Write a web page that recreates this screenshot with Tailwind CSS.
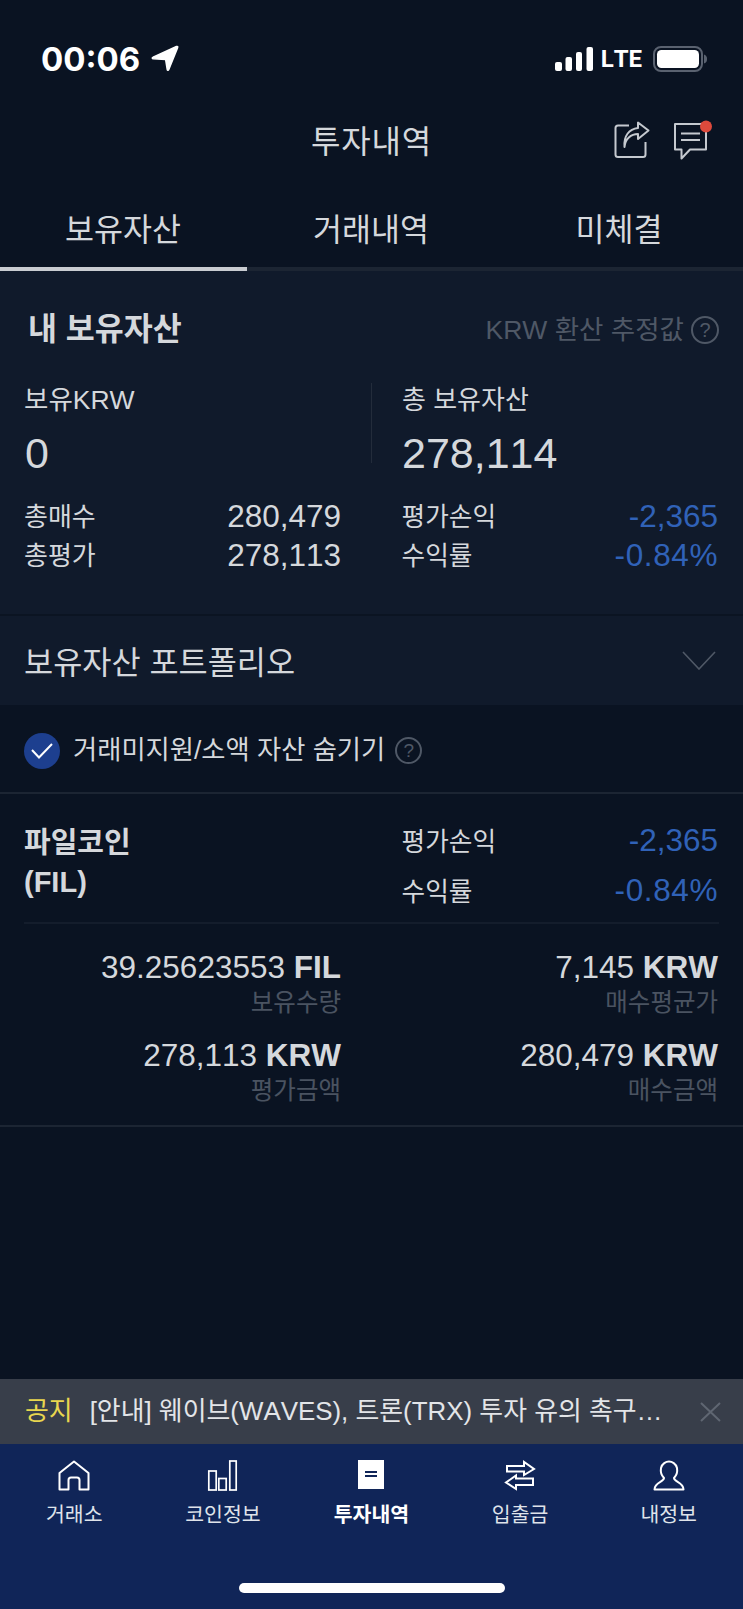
<!DOCTYPE html>
<html lang="ko">
<head>
<meta charset="utf-8">
<title>투자내역</title>
<script src="https://cdn.jsdelivr.net/npm/@tailwindcss/browser@4"></script>
</head>
<body class="bg-[#0a1322]">
<div class="w-[743px] h-[1609px] flex flex-col overflow-hidden bg-[#0a1322] text-[#d5d8dc] [font-kerning:none] font-['Liberation_Sans','Noto_Sans_CJK_KR',sans-serif]">

	<!-- status bar -->
	<div class="h-[116px] pt-[2px] shrink-0 flex items-center justify-between pl-[41px] pr-[35px]">
		<div class="flex items-center gap-[11px]">
			<span class="text-[33px] leading-none font-bold text-white font-['Inter',sans-serif]">00:06</span>
			<svg width="28" height="27" viewBox="0 0 28 27" class="-mt-[1px]"><path d="M25.5 1.5C26.5 1.2 27 1.7 26.6 2.6L17.8 24.4C17.3 25.7 16.4 25.6 16.2 24.4L14.6 14.4L2.4 13.8C1 13.7 0.9 12.7 2.1 12.2Z" fill="#fff" stroke="#fff" stroke-width="1.5" stroke-linejoin="round"/></svg>
		</div>
		<div class="flex items-center">
			<svg width="38" height="24" viewBox="0 0 38 24" fill="#fff"><rect x="0" y="15" width="7" height="9" rx="2"/><rect x="10.5" y="10" width="6.5" height="14" rx="2"/><rect x="21" y="5" width="6" height="19" rx="2"/><rect x="31.5" y="0" width="6.5" height="24" rx="2"/></svg>
			<span class="ml-[8px] text-[24px] leading-none font-bold text-white font-['Roboto',sans-serif]">LTE</span>
			<svg width="55" height="26" viewBox="0 0 55 26" class="ml-[11px]"><rect x="1" y="1" width="48" height="24" rx="7" fill="none" stroke="#5a6270" stroke-width="2"/><rect x="4" y="4" width="42" height="18" rx="4.5" fill="#fff"/><path d="M51 8.5C53.5 9.5 54 11 54 13C54 15 53.5 16.5 51 17.5Z" fill="#5a6270"/></svg>
		</div>
	</div>

	<!-- title -->
	<div class="h-[48px] pt-[3px] shrink-0 relative flex items-center justify-center">
		<span class="text-[32px] leading-none tracking-[0.8px] text-[#d5d8dc]">투자내역</span>
		<svg width="36" height="38" viewBox="0 0 36 38" fill="none" stroke="#c5c9cf" stroke-width="2" class="absolute left-[614px] top-[5px]"><path d="M15 4.5H4C2.5 4.5 1.5 5.5 1.5 7V33.5C1.5 35 2.5 36 4 36H29C30.5 36 31.5 35 31.5 33.5V21"/><path d="M10.5 26C11 18 17 13 24 13V18L34.5 9.5L24 1.5V7C15 8 9.5 15 10.5 26Z" stroke-linejoin="round"/></svg>
		<svg width="42" height="42" viewBox="0 0 42 42" fill="none" class="absolute left-[673px] top-[4px]"><path d="M2 4H33V29.5H17L8.5 38.5V29.5H2Z" stroke="#c5c9cf" stroke-width="2" stroke-linejoin="round"/><path d="M8 13.5H27M8 20H27" stroke="#c5c9cf" stroke-width="2"/><circle cx="33" cy="6.5" r="6" fill="#dd4a3c"/></svg>
	</div>

	<!-- tabs -->
	<div class="h-[74px] mt-[29px] pt-[1px] shrink-0 flex items-center text-[31.5px] leading-none text-[#d5d8dc]">
		<div class="flex-1 text-center -ml-[1px]">보유자산</div>
		<div class="flex-1 text-center">거래내역</div>
		<div class="flex-1 text-center">미체결</div>
	</div>
	<div class="h-[4px] shrink-0 bg-[#1c2533]"><div class="w-[247px] h-full bg-[#c9ccd1]"></div></div>

	<!-- summary card -->
	<div class="h-[343px] shrink-0 bg-[#101a2b]">
		<div class="h-[114px] pt-[4px] flex items-center justify-between pl-[28px] pr-[24px]">
			<span class="text-[31.5px] leading-none font-bold">내 보유자산</span>
			<div class="flex items-center gap-[7px] text-[#4f5866]">
				<span class="text-[26.5px] leading-none">KRW 환산 추정값</span>
				<span class="w-[28px] h-[28px] rounded-full border-2 border-[#4f5866] flex items-center justify-center text-[20px] leading-none">?</span>
			</div>
		</div>
		<div class="flex px-[24px]">
			<div class="w-[317px] pr-0">
				<div class="h-[30px] text-[26.5px] leading-[30px]">보유KRW</div>
				<div class="h-[46px] mt-[15px] pl-[1px] text-[43px] leading-[46px]">0</div>
			</div>
			<div class="w-[1px] h-[80px] -mt-[2px] ml-[30px] mr-[30px] bg-[#232c3b]"></div>
			<div class="flex-1">
				<div class="h-[30px] text-[26px] leading-[30px]">총 보유자산</div>
				<div class="h-[46px] mt-[15px] text-[43px] leading-[46px]">278,114</div>
			</div>
		</div>
		<div class="flex justify-between px-[24px] mt-[22px] text-[31.5px] leading-[39px]">
			<div class="w-[317px]">
				<div class="flex justify-between items-center h-[39px]"><span class="text-[26px]">총매수</span><span class="mb-[2px]">280,479</span></div>
				<div class="flex justify-between items-center h-[39px]"><span class="text-[26px]">총평가</span><span class="mb-[2px]">278,113</span></div>
			</div>
			<div class="w-[317.5px] pr-[1px]">
				<div class="flex justify-between items-center h-[39px]"><span class="text-[25.7px]">평가손익</span><span class="mb-[2px] text-[#3062b8]">-2,365</span></div>
				<div class="flex justify-between items-center h-[39px]"><span class="text-[25.7px]">수익률</span><span class="mb-[2px] tracking-[0.6px] text-[#3062b8]">-0.84%</span></div>
			</div>
		</div>
	</div>

	<!-- portfolio -->
	<div class="h-[91px] pt-[6px] shrink-0 border-t-2 border-[#0b1422] bg-[#101a2b] flex items-center justify-between pl-[24px] pr-[27px]">
		<span class="text-[31.7px] leading-none">보유자산 포트폴리오</span>
		<svg width="34" height="19" viewBox="0 0 34 19" fill="none" stroke="#4f5866" stroke-width="1.6" class="-mt-[6px]"><path d="M1 1L17 18L33 1"/></svg>
	</div>

	<!-- hide toggle -->
	<div class="h-[89px] pt-[4px] shrink-0 border-b-2 border-[#1c2533] flex items-center pl-[24px]">
		<span class="w-[36px] h-[36px] rounded-full bg-[#1d3f8f] flex items-center justify-center">
			<svg width="22" height="16" viewBox="0 0 22 16" fill="none" stroke="#fff" stroke-width="2"><path d="M1 7L8 14.5L21 1"/></svg>
		</span>
		<span class="ml-[13px] text-[26.3px] leading-none">거래미지원/소액 자산 숨기기</span>
		<span class="ml-[10px] w-[27px] h-[27px] rounded-full border-2 border-[#4f5866] text-[#4f5866] flex items-center justify-center text-[19px] leading-none">?</span>
	</div>

	<!-- coin row -->
	<div class="shrink-0 border-b-2 border-[#1c2533] h-[333px] px-[24px]">
		<div class="flex justify-between h-[130px] border-b-2 border-[#141d2c]">
			<div class="w-[317px] pt-[30px] text-[29px] leading-[39px] font-bold">파일코인<br>(FIL)</div>
			<div class="w-[317.5px] pr-[1px] pt-[28px] text-[31.5px]">
				<div class="flex justify-between items-center h-[40px]"><span class="text-[25.7px]">평가손익</span><span class="mb-[2px] text-[#3062b8]">-2,365</span></div>
				<div class="flex justify-between items-center h-[40px] mt-[10px]"><span class="text-[25.7px]">수익률</span><span class="mb-[2px] tracking-[0.6px] text-[#3062b8]">-0.84%</span></div>
			</div>
		</div>
		<div class="grid grid-cols-[317px_316px] justify-between text-right pt-[25px] gap-y-[16px] pr-[1px]">
			<div>
				<div class="text-[31.5px] leading-[36px]">39.25623553 <b>FIL</b></div>
				<div class="text-[24.5px] leading-[36px] text-[#4a5361]">보유수량</div>
			</div>
			<div>
				<div class="text-[31.5px] leading-[36px]">7,145 <b>KRW</b></div>
				<div class="text-[24.5px] leading-[36px] text-[#4a5361]">매수평균가</div>
			</div>
			<div>
				<div class="text-[31.5px] leading-[36px]">278,113 <b>KRW</b></div>
				<div class="text-[24.5px] leading-[36px] text-[#4a5361]">평가금액</div>
			</div>
			<div>
				<div class="text-[31.5px] leading-[36px]">280,479 <b>KRW</b></div>
				<div class="text-[24.5px] leading-[36px] text-[#4a5361]">매수금액</div>
			</div>
		</div>
	</div>

	<div class="flex-1"></div>

	<!-- notice -->
	<div class="h-[65px] shrink-0 bg-[#383e4a] flex items-center pl-[25px] pr-[22px] text-[25.9px] leading-none">
		<span class="text-[#e9d64f]">공지</span>
		<span class="ml-[17px] flex-1 text-[#e3e5e8] whitespace-nowrap">[안내] 웨이브(WAVES), 트론(TRX) 투자 유의 촉구…</span>
		<svg width="21" height="20" viewBox="0 0 21 20" fill="none" stroke="#5f6672" stroke-width="2"><path d="M1 1L20 19M20 1L1 19"/></svg>
	</div>

	<!-- bottom nav -->
	<div class="h-[165px] shrink-0 bg-[#102558] relative">
		<div class="flex pt-[16px] text-[20.5px] leading-none text-[#dfe3ea]">
			<div class="flex-1 flex flex-col items-center">
				<svg width="32" height="31" viewBox="0 0 32 31" fill="none" stroke="#fff" stroke-width="2" stroke-linejoin="round"><path d="M1.5 29.5V13L16 1.5L30.5 13V29.5H21.5V20C21.5 18.5 20.5 17.5 19 17.5H13C11.5 17.5 10.5 18.5 10.5 20V29.5Z"/></svg>
				<span class="mt-[14px]">거래소</span>
			</div>
			<div class="flex-1 flex flex-col items-center">
				<svg width="32" height="31" viewBox="0 0 32 31" fill="none" stroke="#fff" stroke-width="1.7"><rect x="1.8" y="11" width="7.4" height="19"/><rect x="11.8" y="18.5" width="7.4" height="11.5"/><rect x="22.8" y="1" width="6.4" height="29"/></svg>
				<span class="mt-[14px]">코인정보</span>
			</div>
			<div class="flex-1 flex flex-col items-center font-bold text-white">
				<svg width="26" height="31" viewBox="0 0 26 31"><rect x="0" y="0" width="26" height="29" fill="#fff"/><path d="M7 12H19M7 16H19" stroke="#102558" stroke-width="2"/></svg>
				<span class="mt-[14px]">투자내역</span>
			</div>
			<div class="flex-1 flex flex-col items-center">
				<svg width="32" height="31" viewBox="0 0 32 31" fill="none" stroke="#fff" stroke-width="2"><path d="M3 6H20V2L30 9L20 15V11.5H3Z" stroke-linejoin="miter"/><path d="M29 18.5H12V15.5L2 22.5L12 29V25H29Z"/></svg>
				<span class="mt-[14px]">입출금</span>
			</div>
			<div class="flex-1 flex flex-col items-center">
				<svg width="32" height="31" viewBox="0 0 32 31" fill="none" stroke="#fff" stroke-width="2" stroke-linejoin="round"><path d="M11 18C8 15 7.5 11 8 8C9 3.5 13 1.5 16 1.5C19 1.5 23 3.5 24 8C24.5 11 24 15 21 18C21 22 30.5 22 30.5 29.5H1.5C1.5 22 11 22 11 18Z"/></svg>
				<span class="mt-[14px]">내정보</span>
			</div>
		</div>
		<div class="absolute left-[239px] bottom-[16px] w-[266px] h-[10px] rounded-full bg-white"></div>
	</div>
</div>
</body>
</html>
